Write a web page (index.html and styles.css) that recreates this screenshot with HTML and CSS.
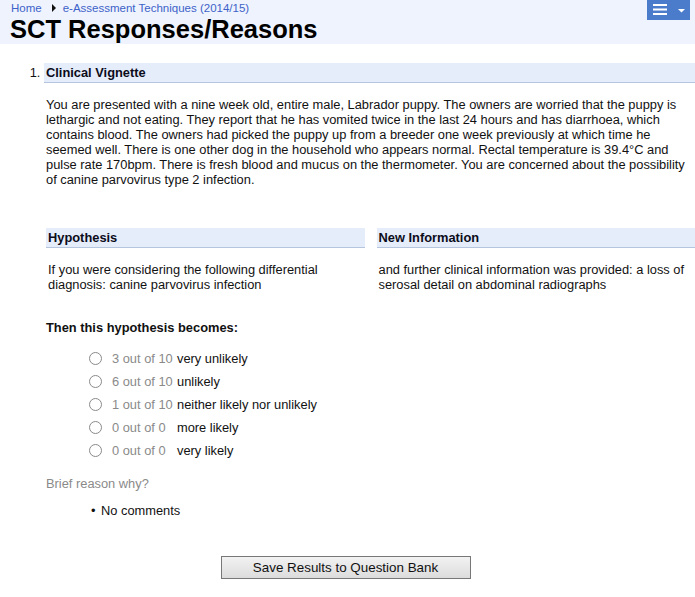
FILE: index.html
```html
<!DOCTYPE html>
<html>
<head>
<meta charset="utf-8">
<link rel="stylesheet" href="styles.css">
</head>
<body>
<header class="page-header">
  <nav class="crumbs">
    <a href="#" class="crumb">Home</a>
    <span class="crumb-arrow"></span>
    <a href="#" class="crumb">e-Assessment Techniques (2014/15)</a>
  </nav>
  <h1 class="title">SCT Responses/Reasons</h1>
  <button class="menu-btn" type="button">
    <svg width="43" height="20" viewBox="0 0 43 20">
      <rect x="6" y="4" width="14" height="2" fill="#fff"/>
      <rect x="6" y="8.5" width="14" height="2" fill="#fff"/>
      <rect x="6" y="13" width="14" height="2" fill="#fff"/>
      <polygon points="31,9 38,9 34.5,12.5" fill="#fff"/>
    </svg>
  </button>
</header>

<ol class="questions">
  <li class="question">
    <h2 class="bar">Clinical Vignette</h2>
    <p class="vignette">You are presented with a nine week old, entire male, Labrador puppy. The owners are worried that the puppy is lethargic and not eating. They report that he has vomited twice in the last 24 hours and has diarrhoea, which contains blood. The owners had picked the puppy up from a breeder one week previously at which time he seemed well. There is one other dog in the household who appears normal. Rectal temperature is 39.4°C and pulse rate 170bpm. There is fresh blood and mucus on the thermometer. You are concerned about the possibility of canine parvovirus type 2 infection.</p>
  </li>
</ol>

<div class="pair">
  <section class="col">
    <h3 class="bar">Hypothesis</h3>
    <p class="col-text">If you were considering the following differential diagnosis: canine parvovirus infection</p>
  </section>
  <section class="col">
    <h3 class="bar">New Information</h3>
    <p class="col-text">and further clinical information was provided: a loss of serosal detail on abdominal radiographs</p>
  </section>
</div>

<div class="answer">
  <p class="becomes">Then this hypothesis becomes:</p>
  <ul class="options">
    <li class="option"><span class="radio"></span><span class="count">3 out of 10</span><span>very unlikely</span></li>
    <li class="option"><span class="radio"></span><span class="count">6 out of 10</span><span>unlikely</span></li>
    <li class="option"><span class="radio"></span><span class="count">1 out of 10</span><span>neither likely nor unlikely</span></li>
    <li class="option"><span class="radio"></span><span class="count">0 out of 0</span><span>more likely</span></li>
    <li class="option"><span class="radio"></span><span class="count">0 out of 0</span><span>very likely</span></li>
  </ul>
  <p class="reason">Brief reason why?</p>
  <ul class="comments">
    <li>No comments</li>
  </ul>
</div>

<div class="actions">
  <button class="save" type="button">Save Results to Question Bank</button>
</div>
</body>
</html>
```

FILE: styles.css
```css
html, body {
  margin: 0;
  padding: 0;
  background: #fff;
  font-family: "Liberation Sans", Arial, sans-serif;
  font-size: 12.85px;
  color: #111;
}

.page-header {
  position: relative;
  background: #eef3fd;
  height: 44px;
  padding: 0 10px;
  box-sizing: border-box;
}

.crumbs {
  display: flex;
  align-items: center;
  padding-left: 1px;
  height: 15px;
  font-size: 11.5px;
}

.crumb {
  color: #3d62c9;
  text-decoration: none;
}

.crumb-arrow {
  width: 0;
  height: 0;
  border-top: 4px solid transparent;
  border-bottom: 4px solid transparent;
  border-left: 4px solid #111;
  margin: 0 7px 0 10px;
}

.title {
  margin: 0;
  font-size: 25.5px;
  line-height: 28px;
  font-weight: bold;
  color: #000;
}

.menu-btn {
  position: absolute;
  top: 0;
  right: 5px;
  width: 43px;
  height: 20px;
  padding: 0;
  border: 0;
  background: #4a7ccb;
  display: block;
}

.menu-btn svg {
  display: block;
}

.questions {
  margin: 19px 0 0 0;
  padding: 0 0 0 44px;
}

.bar {
  margin: 0;
  background: #e5edfb;
  border-bottom: 1px solid #b6c5de;
  font-size: 12.85px;
  font-weight: bold;
  line-height: 19px;
  padding: 0 2px;
  color: #0c0c1a;
}

.vignette {
  margin: 14px 0 0 0;
  padding: 0 4px 0 2px;
  line-height: 15px;
}

.pair {
  display: flex;
  gap: 12px;
  margin: 41px 0 0 46px;
}

.col {
  flex: 1;
}

.col-text {
  margin: 14px 0 0 0;
  padding: 0 2px;
  line-height: 15px;
}

.answer {
  margin: 0 0 0 46px;
}

.becomes {
  margin: 28px 0 0 0;
  font-weight: bold;
  line-height: 15px;
}

.options {
  list-style: none;
  margin: 12px 0 0 0;
  padding: 0 0 0 43px;
}

.option {
  display: flex;
  align-items: center;
  height: 23px;
}

.radio {
  width: 11px;
  height: 11px;
  border: 1px solid #8a8a8a;
  border-radius: 50%;
  background: #fff;
  margin-right: 10px;
}

.count {
  color: #8a8a8a;
  width: 65px;
}

.reason {
  color: #8a8a8a;
  margin: 14px 0 0 0;
  line-height: 15px;
}

.comments {
  margin: 12px 0 0 0;
  padding: 0 0 0 55px;
  list-style: none;
  line-height: 15px;
}

.comments li {
  position: relative;
}

.comments li::before {
  content: "\2022";
  position: absolute;
  left: -10px;
}

.actions {
  display: flex;
  justify-content: center;
  margin-top: 38px;
  padding-right: 4px;
}

.save {
  width: 250px;
  height: 23px;
  font-family: "Liberation Sans", Arial, sans-serif;
  font-size: 13.4px;
  color: #111;
  background: linear-gradient(#f2f2f2, #dcdcdc);
  border: 1px solid #777;
  border-radius: 0;
  padding: 0;
}
```
